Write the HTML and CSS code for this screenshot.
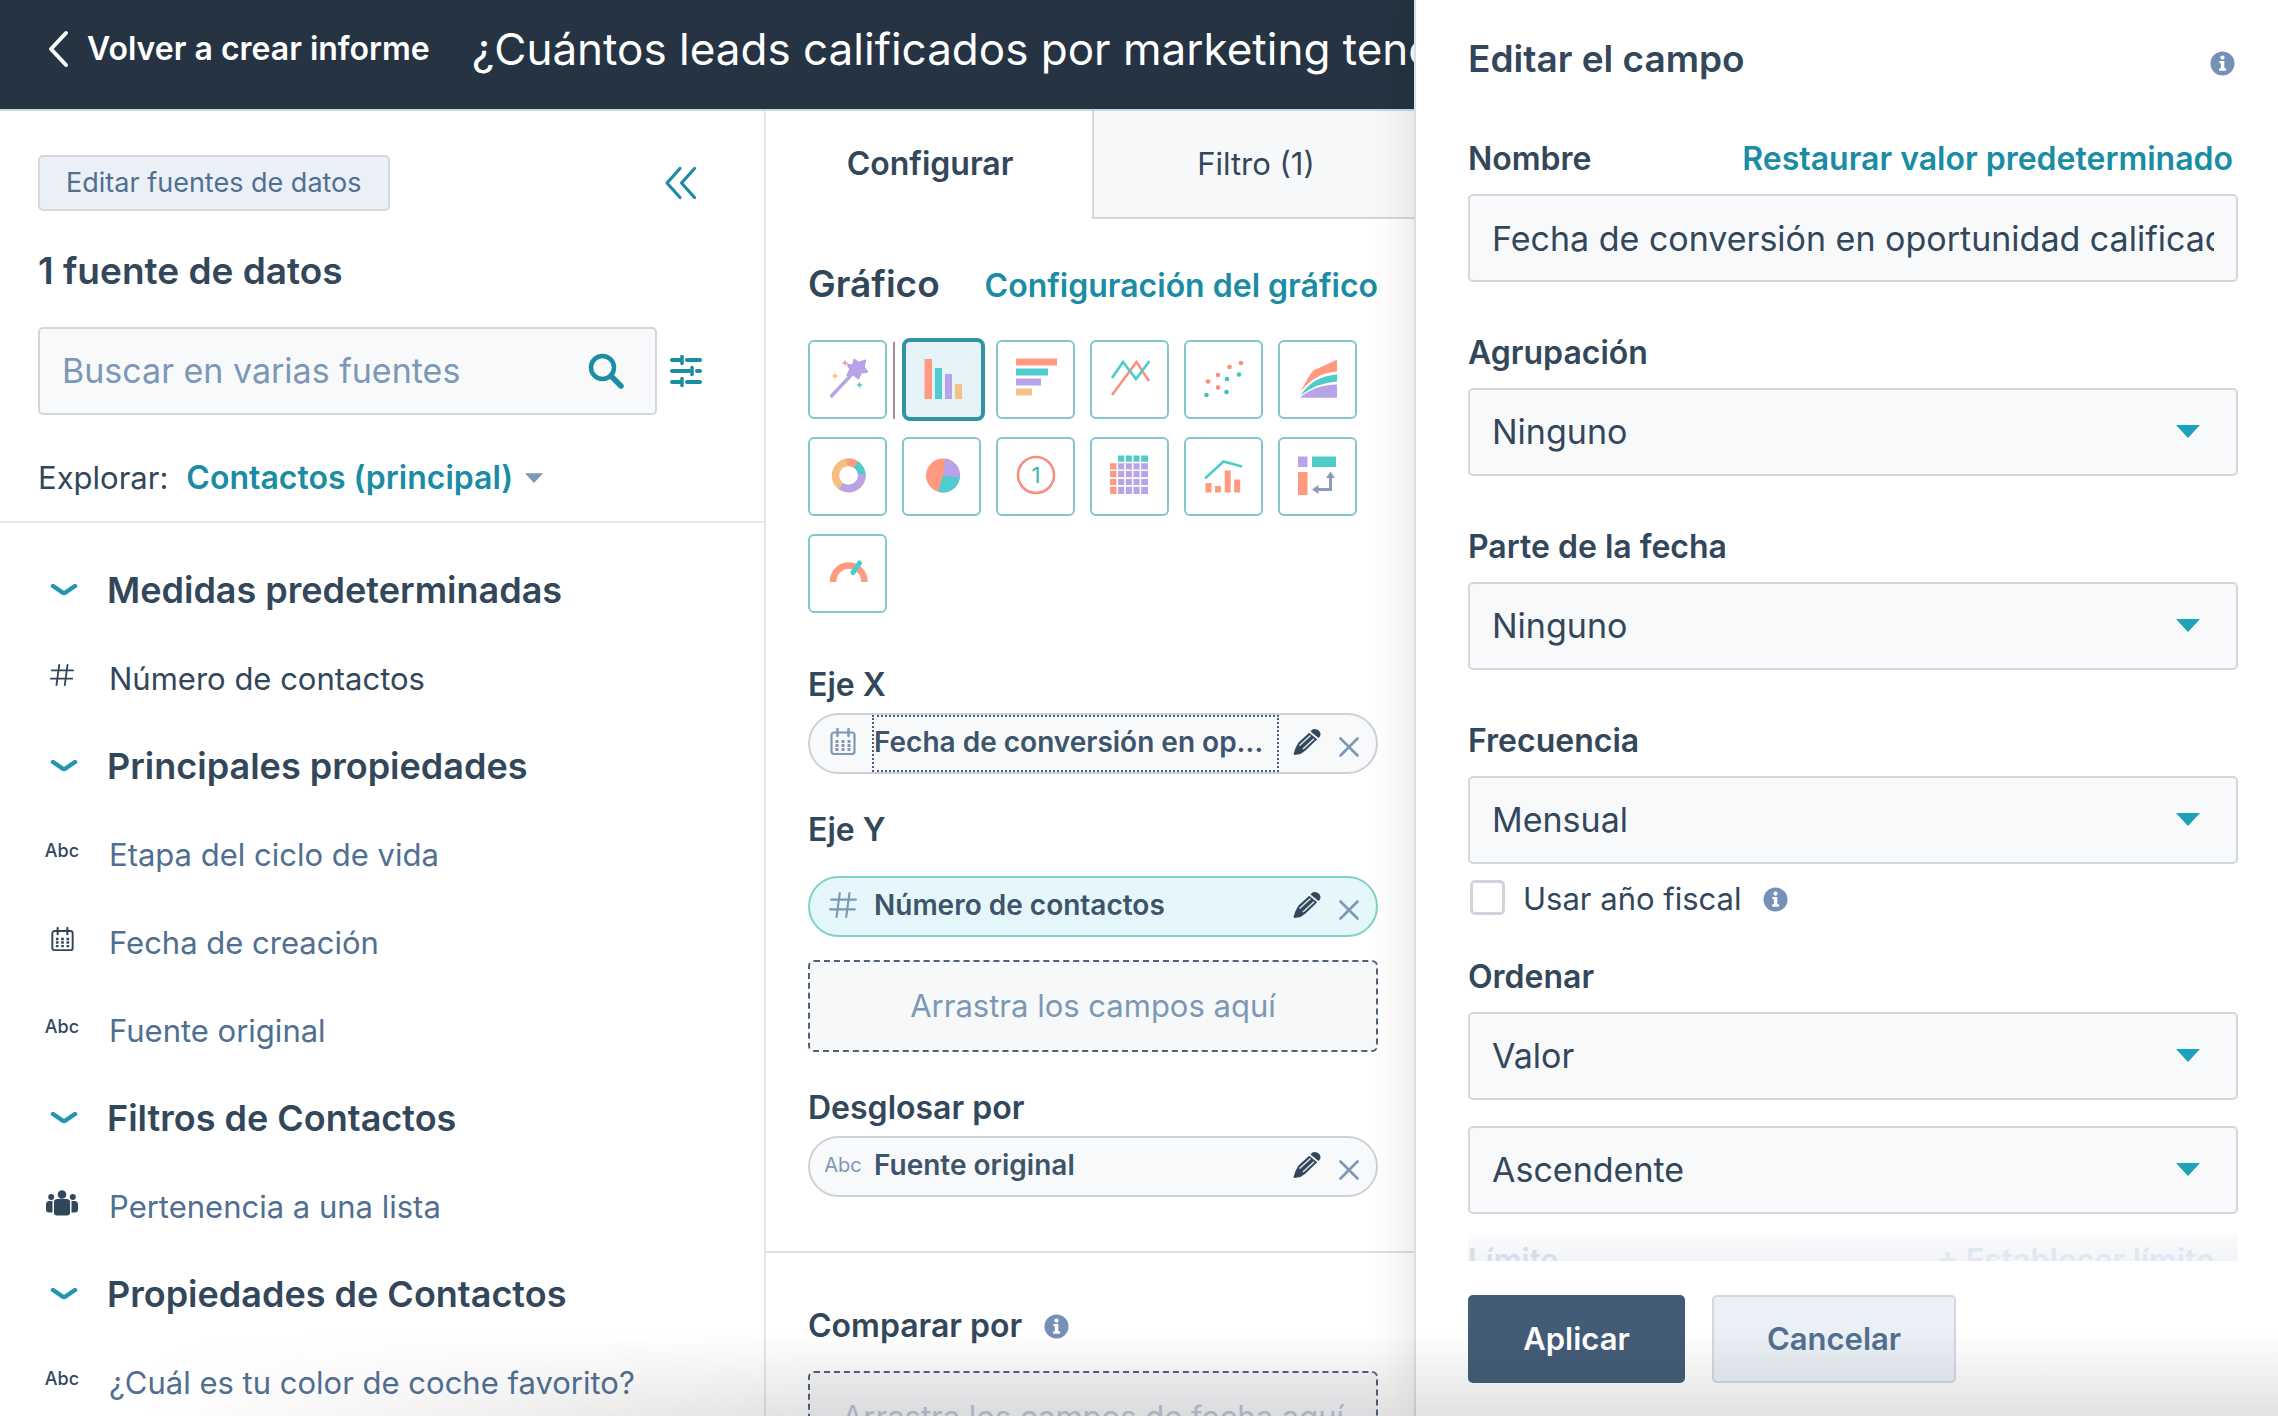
FILE: index.html
```html
<!DOCTYPE html>
<html lang="es">
<head>
<meta charset="utf-8">
<meta name="viewport" content="width=device-width, initial-scale=1">
<title>Creador de informes</title>
<link rel="stylesheet" href="styles.css">
</head>
<body>
<svg class="sprite" aria-hidden="true">
  <symbol id="i-chevron" viewBox="0 0 28 16"><path d="M3 4L12.500 10.500Q14 11.500 15.500 10.500L25 4" fill="none" stroke="currentColor" stroke-width="4.500" stroke-linecap="round" stroke-linejoin="round"/></symbol>
  <symbol id="i-hash" viewBox="0 0 26 26"><path d="M10 2L7 24M19 2L16 24M2 8H25M1 17H24" fill="none" stroke="currentColor" stroke-width="2" stroke-linecap="round"/></symbol>
  <symbol id="i-calendar" viewBox="0 0 26 28"><rect x="1.500" y="4.500" width="23" height="21.500" rx="2.500" fill="none" stroke="currentColor" stroke-width="2.200"/><path d="M7.500 1V8M18.500 1V8" stroke="currentColor" stroke-width="2.400" stroke-linecap="round"/><path d="M5.500 13.500H20.500M5.500 17.500H20.500M5.500 21.500H20.500" stroke="currentColor" stroke-width="2.800" stroke-dasharray="3 3"/></symbol>
  <symbol id="i-people" viewBox="0 0 32 26"><g fill="currentColor"><circle cx="16" cy="4.500" r="4.300"/><path d="M8 12q0-3 3.500-3h9q3.500 0 3.500 3v11q0 2-3 2.500H11q-3-.5-3-2.500z"/><circle cx="5.200" cy="7" r="3"/><circle cx="26.800" cy="7" r="3"/><path d="M6.500 11v11.500H3q-3 0-3-3V14.500Q0 11 3.500 11zM25.500 11v11.500H29q3 0 3-3V14.500Q32 11 28.500 11z"/></g></symbol>
  <symbol id="i-pencil" viewBox="0 0 28 28"><g fill="currentColor"><path d="M17.500 3.500Q19.500 .5 23 1.200 27.500 2.500 27.500 6.500 27.300 8.500 25.500 10z"/><path d="M16.200 4.800L24.200 11.300 12.500 22.500 7.500 26 1.500 27 .5 26 2.500 20 5.500 14.500z"/></g><path d="M6.500 17.500L17.500 7.500M10 21L21 10.800" stroke="#dde7f0" stroke-width="1.500"/></symbol>
  <symbol id="i-close" viewBox="0 0 20 20"><path d="M1.500 1.500L18.500 18.500M18.500 1.500L1.500 18.500" stroke="currentColor" stroke-width="2.600" stroke-linecap="round"/></symbol>
  <symbol id="i-info" viewBox="0 0 26 26"><circle cx="13" cy="13" r="12.500" fill="currentColor"/><circle cx="13" cy="6.800" r="2.200" fill="#fff"/><path d="M9.800 10.500H14.900V18H16.700V20.500H9.600V18H11.300V12.800H9.800z" fill="#fff"/></symbol>
  <symbol id="i-caret" viewBox="0 0 24 13"><path d="M0 0H24L12 13z" fill="currentColor"/></symbol>
</svg>

<div class="app">
  <header class="topbar">
    <a class="back" href="#">
      <svg class="back-icon" viewBox="0 0 22 38" aria-hidden="true"><path d="M19 3L4 19 19 35" fill="none" stroke="currentColor" stroke-width="4" stroke-linecap="round" stroke-linejoin="round"/></svg>
      Volver a crear informe
    </a>
    <h1 class="report-title">¿Cuántos leads calificados por marketing tenemos?</h1>
  </header>

  <aside class="sources">
    <div class="sources-head">
      <div class="sources-actions">
        <button class="btn-small" type="button">Editar fuentes de datos</button>
        <button class="icon-btn" type="button" aria-label="Contraer">
          <svg width="34" height="34" viewBox="0 0 34 34" aria-hidden="true"><path d="M16 2.500L3 17 16 31.500M30.500 2.500L17.500 17 30.500 31.500" fill="none" stroke="currentColor" stroke-width="3.200" stroke-linecap="round" stroke-linejoin="round"/></svg>
        </button>
      </div>
      <h2 class="sources-count">1 fuente de datos</h2>
      <div class="search-row">
        <div class="search">
          <input type="search" aria-label="Buscar en varias fuentes" placeholder="Buscar en varias fuentes">
          <svg width="36" height="36" viewBox="0 0 36 36" aria-hidden="true"><circle cx="14.500" cy="14.500" r="11.500" fill="none" stroke="currentColor" stroke-width="4.500"/><path d="M23 23L33 33" stroke="currentColor" stroke-width="5.500" stroke-linecap="round"/></svg>
        </div>
        <button class="icon-btn" type="button" aria-label="Filtros">
          <svg width="32" height="32" viewBox="0 0 32 32" aria-hidden="true"><path d="M2 5H11M17 5H30M2 16H19M27 16H30M2 27H11M17 27H30" stroke="currentColor" stroke-width="4" stroke-linecap="round"/><path d="M12 1.500V8.500M22 12.500V19.500M12 23.500V30.500" stroke="currentColor" stroke-width="3.500" stroke-linecap="round"/></svg>
        </button>
      </div>
      <div class="explore">
        <span>Explorar:</span>
        <button class="link-btn" type="button">Contactos (principal)<svg class="explore-caret" aria-hidden="true"><use href="#i-caret"/></svg></button>
      </div>
    </div>
    <div class="tree">
      <button class="group" type="button"><svg class="chev" aria-hidden="true"><use href="#i-chevron"/></svg>Medidas predeterminadas</button>
      <div class="field strong"><span class="type"><svg class="t-hash" aria-hidden="true"><use href="#i-hash"/></svg></span>Número de contactos</div>
      <button class="group" type="button"><svg class="chev" aria-hidden="true"><use href="#i-chevron"/></svg>Principales propiedades</button>
      <div class="field"><span class="type">Abc</span>Etapa del ciclo de vida</div>
      <div class="field"><span class="type"><svg class="t-cal" aria-hidden="true"><use href="#i-calendar"/></svg></span>Fecha de creación</div>
      <div class="field"><span class="type">Abc</span>Fuente original</div>
      <button class="group" type="button"><svg class="chev" aria-hidden="true"><use href="#i-chevron"/></svg>Filtros de Contactos</button>
      <div class="field"><span class="type"><svg class="t-people" aria-hidden="true"><use href="#i-people"/></svg></span>Pertenencia a una lista</div>
      <button class="group" type="button"><svg class="chev" aria-hidden="true"><use href="#i-chevron"/></svg>Propiedades de Contactos</button>
      <div class="field"><span class="type">Abc</span>¿Cuál es tu color de coche favorito?</div>
    </div>
  </aside>

  <main class="config">
    <div class="tabs" role="tablist">
      <button class="tab active" type="button" role="tab" aria-selected="true">Configurar</button>
      <button class="tab" type="button" role="tab" aria-selected="false">Filtro (1)</button>
    </div>
    <section class="config-body">
      <div class="chart-head">
        <h2>Gráfico</h2>
        <a class="link" href="#">Configuración del gráfico</a>
      </div>
      <div class="charts">
        <button class="chart auto" type="button" aria-label="Automático"><svg viewBox="2 2 75 75"><path d="M23.500 56L46 32" stroke="#b9a3e8" stroke-width="3.400" stroke-linecap="round"/><path d="M46 19.500l5 2.800 6.500-2-1.500 6.500 3.500 5.200-6.300.8-2.700 6-5-4-6.500.5 3-5.800-2.500-5 5.500.5z" fill="#b9a3e8" stroke="#b9a3e8" stroke-width="1.500" stroke-linejoin="round"/><path d="M37 19.500l1 2.500 2.500 1-2.500 1-1 2.500-1-2.500-2.500-1 2.500-1z" fill="#f29aa0"/><path d="M27 32.500l1 2.500 2.500 1-2.500 1-1 2.500-1-2.500-2.500-1 2.500-1z" fill="#f5c26b"/><path d="M51.500 41.500l1 2.500 2.500 1-2.500 1-1 2.500-1-2.500-2.500-1 2.500-1z" fill="#4fccc8"/></svg></button>
        <button class="chart selected" type="button" aria-label="Barras verticales" aria-pressed="true"><svg viewBox="4 4 75 75"><path d="M22.500 21h7.500v40h-7.500z" fill="#ff9980"/><path d="M33 30h7v31h-7z" fill="#4fccd0"/><path d="M43 36h7v25h-7z" fill="#b9a3e8"/><path d="M53 46h7v15h-7z" fill="#f5c286"/></svg></button>
        <button class="chart" type="button" aria-label="Barras horizontales"><svg viewBox="2 2 75 75"><path d="M20 18.500h41v7H20z" fill="#ff9980"/><path d="M20 28.500h32v7H20z" fill="#4fccd0"/><path d="M20 38.500h25v7H20z" fill="#b9a3e8"/><path d="M20 48.500h16v7H20z" fill="#f5c286"/></svg></button>
        <button class="chart" type="button" aria-label="Líneas"><svg viewBox="2 2 75 75" fill="none" stroke-width="2.600"><path d="M22 55L46.500 22 59 41" stroke="#ff8f80"/><path d="M22 38L33 22 46 39 59.500 21" stroke="#4fccc8"/></svg></button>
        <button class="chart" type="button" aria-label="Dispersión"><svg viewBox="2 2 75 75"><g fill="#f78f7c"><circle cx="57" cy="23" r="2.300"/><circle cx="45.500" cy="27" r="2.300"/><circle cx="34" cy="35" r="2.300"/><circle cx="24" cy="41.500" r="2.300"/><circle cx="34" cy="47.500" r="2.300"/></g><g fill="#3fc4bc"><circle cx="55" cy="34.500" r="2.300"/><circle cx="43" cy="39" r="2.300"/><circle cx="22.500" cy="55" r="2.300"/><circle cx="42.500" cy="52" r="2.300"/></g></svg></button>
        <button class="chart" type="button" aria-label="Áreas"><svg viewBox="2 2 75 75"><path d="M59 19.500V31.500Q37 33 22.500 52Q32 33 36 30Q46 26 59 19.500z" fill="#ff9980"/><path d="M59 34.500V41.500Q38 43 22.500 55.500Q35 36 59 34.500z" fill="#4fccc8"/><path d="M59 44.500V57.700H22Q36 45 59 44.500z" fill="#b9a3e8"/></svg></button>
        <button class="chart" type="button" aria-label="Anillo"><svg viewBox="2 2 75 75" fill="none" stroke-width="7.500"><circle cx="40.700" cy="38.500" r="13.200" stroke="#f5bd82"/><path d="M44.500 25.900A13.200 13.200 0 0 1 53.600 41" stroke="#4fccc8"/><path d="M53.700 37A13.200 13.200 0 0 1 33 49" stroke="#b9a3e8"/><path d="M39 25.400A13.200 13.200 0 0 1 48 27.500" stroke="#ff9980"/></svg></button>
        <button class="chart" type="button" aria-label="Circular"><svg viewBox="2 2 75 75"><circle cx="41" cy="38.500" r="17" fill="#ff9980"/><path d="M41 38.500L43 21.600A17 17 0 0 1 57.800 41.500z" fill="#b9a3e8"/><path d="M41 38.500L57.900 40.500A17 17 0 0 1 36 54.800z" fill="#4fccd0"/></svg></button>
        <button class="chart" type="button" aria-label="Resumen"><svg viewBox="2 2 75 75"><circle cx="40" cy="38" r="18" fill="none" stroke="#f58f80" stroke-width="2.600"/><text x="40" y="46" class="one">1</text></svg></button>
        <button class="chart" type="button" aria-label="Tabla"><svg viewBox="2 2 75 75"><path d="M28 18.500H58V25H28z" fill="#4fccc8"/><path d="M20 26H28V57H20z" fill="#ff9980"/><path d="M28 26H58V57H28z" fill="#b9a3e8"/><path d="M27.300 18V57M35 18V57M42.700 18V57M50.400 18V57M20 25.500H58M20 33.300H58M20 41.100H58M20 48.900H58" stroke="#fff" stroke-width="1.600"/></svg></button>
        <button class="chart" type="button" aria-label="Combinado"><svg viewBox="2 2 75 75"><path d="M21 41.500L39.500 24.500 58 29.500" fill="none" stroke="#4fccc8" stroke-width="2.600"/><path d="M21.500 46h6v9.500h-6zM31 49h6v6.500h-6zM40.700 33.500h6v22h-6zM50.200 42.500h6v13h-6z" fill="#ff9980"/></svg></button>
        <button class="chart" type="button" aria-label="Tabla dinámica"><svg viewBox="2 2 75 75"><path d="M20 19.500h9.500v10.500H20z" fill="#b9a3e8"/><path d="M34 19.500h24v10.500H34z" fill="#4fccc8"/><path d="M20 35h9.500v23H20z" fill="#ff9980"/><path d="M52.500 40V52.500H39" fill="none" stroke="#8b9bb8" stroke-width="3"/><path d="M52.500 34.500L57 41H48zM34 52.500L40.500 48V57z" fill="#8b9bb8"/></svg></button>
        <button class="chart" type="button" aria-label="Indicador"><svg viewBox="2 2 75 75" fill="none"><path d="M25 48A15.700 16.500 0 0 1 56.500 48" stroke="#ff9980" stroke-width="6.600"/><path d="M51.500 29L45 38.500" stroke="#4fccc8" stroke-width="5" stroke-linecap="round"/></svg></button>
      </div>

      <h3 class="axis">Eje X</h3>
      <div class="chip">
        <span class="chip-type"><svg class="c-cal" aria-hidden="true"><use href="#i-calendar"/></svg></span>
        <span class="chip-name focused">Fecha de conversión en oportunidad</span>
        <button class="chip-edit" type="button" aria-label="Editar"><svg><use href="#i-pencil"/></svg></button>
        <button class="chip-x" type="button" aria-label="Quitar"><svg><use href="#i-close"/></svg></button>
      </div>

      <h3 class="axis spaced">Eje Y</h3>
      <div class="chip measure">
        <span class="chip-type"><svg class="c-hash" aria-hidden="true"><use href="#i-hash"/></svg></span>
        <span class="chip-name">Número de contactos</span>
        <button class="chip-edit" type="button" aria-label="Editar"><svg><use href="#i-pencil"/></svg></button>
        <button class="chip-x" type="button" aria-label="Quitar"><svg><use href="#i-close"/></svg></button>
      </div>
      <div class="drop">Arrastra los campos aquí</div>

      <h3 class="axis">Desglosar por</h3>
      <div class="chip">
        <span class="chip-type">Abc</span>
        <span class="chip-name">Fuente original</span>
        <button class="chip-edit" type="button" aria-label="Editar"><svg><use href="#i-pencil"/></svg></button>
        <button class="chip-x" type="button" aria-label="Quitar"><svg><use href="#i-close"/></svg></button>
      </div>
    </section>
    <section class="compare">
      <h3 class="axis">Comparar por <svg class="info" aria-hidden="true"><use href="#i-info"/></svg></h3>
      <div class="drop">Arrastra los campos de fecha aquí</div>
    </section>
  </main>

  <form class="panel">
    <div class="panel-body">
      <div class="panel-head">
        <h2>Editar el campo</h2>
        <svg class="info" aria-hidden="true"><use href="#i-info"/></svg>
      </div>
      <div class="control">
        <div class="label-row"><label for="nombre">Nombre</label><a class="link" href="#">Restaurar valor predeterminado</a></div>
        <input class="box" id="nombre" type="text" value="Fecha de conversión en oportunidad calificada">
      </div>
      <div class="control">
        <label for="agrupacion">Agrupación</label>
        <div class="select"><select class="box" id="agrupacion"><option>Ninguno</option></select><svg aria-hidden="true"><use href="#i-caret"/></svg></div>
      </div>
      <div class="control">
        <label for="parte">Parte de la fecha</label>
        <div class="select"><select class="box" id="parte"><option>Ninguno</option></select><svg aria-hidden="true"><use href="#i-caret"/></svg></div>
      </div>
      <div class="control">
        <label for="frecuencia">Frecuencia</label>
        <div class="select"><select class="box" id="frecuencia"><option>Mensual</option></select><svg aria-hidden="true"><use href="#i-caret"/></svg></div>
      </div>
      <div class="check">
        <input id="fiscal" type="checkbox"><label for="fiscal">Usar año fiscal</label>
        <svg class="info" aria-hidden="true"><use href="#i-info"/></svg>
      </div>
      <div class="control sort">
        <label for="ordenar">Ordenar</label>
        <div class="select"><select class="box" id="ordenar"><option>Valor</option></select><svg aria-hidden="true"><use href="#i-caret"/></svg></div>
        <div class="select second"><select class="box" aria-label="Dirección"><option>Ascendente</option></select><svg aria-hidden="true"><use href="#i-caret"/></svg></div>
      </div>
      <div class="limit"><span>Límite</span><span class="limit-add">+ Establecer límite</span></div>
    </div>
    <div class="panel-foot">
      <button class="btn primary" type="button">Aplicar</button>
      <button class="btn secondary" type="button">Cancelar</button>
    </div>
  </form>
</div>
</body>
</html>
```

FILE: styles.css
```css
:root {
  --text: #33475b;
  --muted: #516f90;
  --soft: #7c98b6;
  --link: #1a8ca3;
  --line: #d3d7dc;
  --field: #f8f9fa;
}

* { box-sizing: border-box; }

body {
  margin: 0;
  background: #fff;
  color: var(--text);
  font-family: Inter, "Open Sans", sans-serif;
  font-size: 31px;
  line-height: 40px;
}

h1, h2, h3 { margin: 0; font-weight: 600; }
button, input, select { font: inherit; color: inherit; }
button { background: none; border: 0; padding: 0; cursor: pointer; }
a { text-decoration: none; }
svg { display: block; flex: none; }
.sprite { position: absolute; width: 0; height: 0; }

.app {
  display: grid;
  grid-template-columns: 766fr 648fr 864fr;
  grid-template-rows: 111px minmax(0, 1fr);
  height: 100vh;
  overflow: hidden;
}

/* Soft shade along the lower edge of the window */
.app::after {
  content: "";
  position: fixed;
  inset: auto 0 0 0;
  height: 84px;
  background: linear-gradient(to bottom, rgba(60, 60, 70, 0), rgba(60, 60, 70, .15));
  -webkit-mask-image: linear-gradient(to right, transparent 6%, #000 36%);
  mask-image: linear-gradient(to right, transparent 6%, #000 36%);
  pointer-events: none;
}

/* Top bar */
.topbar {
  grid-column: 1 / 3;
  display: flex;
  align-items: center;
  gap: 42px;
  padding: 0 0 12px 47px;
  background: #253342;
  border-bottom: 2px solid #c3dbe3;
  overflow: hidden;
  white-space: nowrap;
  color: #fff;
}
.back { display: flex; align-items: center; gap: 18px; color: #fff; font-size: 32px; font-weight: 600; }
.back-icon { width: 22px; height: 38px; }
.report-title { font-size: 44px; line-height: 56px; font-weight: 400; }

/* Data sources */
.sources { border-right: 2px solid #e3e6ea; overflow: hidden; }
.sources-head { padding: 44px 62px 23px 38px; border-bottom: 2px solid #e6e8eb; }
.sources-actions { display: flex; justify-content: space-between; align-items: center; padding-right: 4px; }
.btn-small {
  height: 56px;
  padding: 0 26px;
  border: 2px solid #d3d8df;
  border-radius: 5px;
  background: #eaf0f6;
  color: var(--muted);
  font-size: 27px;
}
.icon-btn { color: var(--link); }
.sources-count { margin-top: 38px; font-size: 37px; line-height: 44px; }
.search-row { display: flex; align-items: center; gap: 13px; margin-top: 34px; }
.search {
  flex: 1;
  min-width: 0;
  display: flex;
  align-items: center;
  height: 88px;
  padding: 0 31px 0 22px;
  border: 2px solid var(--line);
  border-radius: 5px;
  background: var(--field);
  color: var(--link);
}
.search input {
  flex: 1;
  min-width: 0;
  border: 0;
  padding: 0;
  outline: 0;
  background: none;
  font-size: 34px;
}
.search input::placeholder { color: var(--soft); opacity: 1; }
.explore { display: flex; align-items: center; gap: 18px; margin-top: 43px; }
.link-btn { display: flex; align-items: center; gap: 12px; color: var(--link); font-size: 32px; font-weight: 600; }
.explore-caret { width: 18px; height: 10px; color: var(--soft); }

.tree { display: flex; flex-direction: column; padding: 23px 38px 0; }
.group, .field { display: flex; align-items: center; height: 88px; white-space: nowrap; flex: none; }
.group { font-size: 36px; font-weight: 600; padding-left: 12px; gap: 29px; }
.chev { width: 28px; height: 16px; color: #2596b0; }
.field { color: var(--muted); gap: 23px; padding-top: 2px; }
.field.strong { color: var(--text); }
.type { display: flex; justify-content: center; width: 48px; padding-bottom: 8px; font-size: 18px; line-height: 24px; font-weight: 500; color: var(--text); }
.t-hash { width: 24px; height: 24px; }
.t-cal { width: 23px; height: 25px; }
.t-people { width: 32px; height: 26px; }

/* Chart configuration */
.config { overflow: hidden; }
.tabs { display: flex; height: 108px; margin-right: -4px; }
.tab { flex: 1; border: solid var(--line); border-width: 0 0 2px 2px; background: #f7f8f9; }
.tab.active { border-color: transparent; background: #fff; font-size: 32px; font-weight: 600; }
.config-body { padding: 43px 36px 54px 42px; border-bottom: 2px solid #dcdfe3; }
.chart-head { display: flex; justify-content: space-between; align-items: flex-end; white-space: nowrap; }
.chart-head h2 { font-size: 37px; line-height: 44px; }
.link { color: var(--link); font-size: 32px; font-weight: 600; }

.charts { display: grid; grid-template-columns: repeat(6, 79px); gap: 18px 15px; margin-top: 34px; }
.chart { position: relative; height: 79px; border: 2px solid #84c6cf; border-radius: 6px; background: #fff; }
.chart svg { width: 75px; height: 75px; }
.chart.auto::after { content: ""; position: absolute; top: 0; bottom: -2px; right: -10px; width: 2px; background: #a58f9d; }
.chart.selected { height: 83px; margin: -2px -4px -2px 0; border: 4px solid #3093a3; border-radius: 8px; background: #e5f2f8; }
.one { fill: #3cb5b5; font-size: 22px; text-anchor: middle; }

.axis { display: flex; align-items: center; gap: 22px; margin-top: 36px; font-size: 32px; line-height: 40px; }
.charts + .axis { margin-top: 52px; }
.chip {
  display: flex;
  align-items: center;
  height: 61px;
  margin-top: 8px;
  padding: 0 13px 0 10px;
  border: 2px solid #cdd2d8;
  border-radius: 31px;
  background: var(--field);
}
.axis.spaced + .chip { margin-top: 26px; }
.chip.measure { border-color: #7ed3c8; background: #e5f7fa; }
.chip-type { display: flex; justify-content: center; width: 46px; margin-right: 6px; padding-bottom: 4px; font-size: 20px; color: var(--soft); }
.c-cal { width: 26px; height: 28px; }
.c-hash { width: 28px; height: 28px; }
.chip-name {
  flex: 1;
  min-width: 0;
  height: 57px;
  padding: 0 0 0 2px;
  line-height: 55px;
  font-weight: 600;
  font-size: 28px;
  color: #3d546b;
  overflow: hidden;
  white-space: nowrap;
  text-overflow: ellipsis;
}
.chip-name.focused { outline: 2px dotted #4a5a83; outline-offset: -2px; }
.chip-edit { padding: 0 18px 4px 14px; color: #33475b; }
.chip-edit svg { width: 28px; height: 28px; }
.chip-x { padding: 6px 4px 0 0; color: var(--soft); }
.chip-x svg { width: 20px; height: 20px; }
.drop {
  display: flex;
  align-items: center;
  justify-content: center;
  height: 92px;
  margin-top: 23px;
  border: 2px dashed #506078;
  border-radius: 6px;
  background: #f7f8f9;
  color: var(--soft);
  white-space: nowrap;
}
.compare { padding: 53px 36px 0 42px; }
.compare .axis { margin-top: 0; }
.compare .drop { margin-top: 25px; color: #bcc6d2; }
.info { width: 25px; height: 25px; color: #7790b8; }

/* Field editor */
.panel {
  grid-column: 3;
  grid-row: 1 / 3;
  display: flex;
  flex-direction: column;
  border-left: 2px solid #dadde1;
  background: #fff;
  box-shadow: 0 0 48px rgba(0, 0, 0, .12);
}
.panel-body { flex: 1; min-height: 0; overflow: hidden; padding: 37px 40px 0 52px; position: relative; }
.panel-body::after {
  content: "";
  position: absolute;
  inset: auto 40px 0 52px;
  height: 28px;
  background: linear-gradient(to bottom, rgba(248, 248, 249, .5), rgba(238, 240, 250, .75));
}
.panel-head { display: flex; justify-content: space-between; align-items: center; margin-bottom: 58px; padding-right: 3px; }
.panel-head h2 { font-size: 37px; line-height: 44px; }
.panel-head .info { margin-top: 8px; }
.control { display: flex; flex-direction: column; margin-bottom: 51px; }
.control label { font-size: 32px; font-weight: 600; }
.label-row { display: flex; justify-content: space-between; padding-right: 5px; white-space: nowrap; }
.box {
  display: block;
  width: 100%;
  height: 88px;
  margin: 15px 0 0;
  padding: 0 22px;
  border: 2px solid var(--line);
  border-radius: 5px;
  background: var(--field);
  font-size: 34px;
  appearance: none;
  -webkit-appearance: none;
}
.select { display: grid; align-items: center; }
.select > * { grid-area: 1 / 1; }
.select svg { justify-self: end; width: 24px; height: 13px; margin: 13px 38px 0 0; color: #1ca3b5; pointer-events: none; }
.check { display: flex; align-items: center; margin-top: -36px; }
.check input {
  appearance: none;
  -webkit-appearance: none;
  width: 35px;
  height: 35px;
  margin: 0 18px 4px 2px;
  border: 3px solid #d0d3de;
  border-radius: 5px;
  background: #fff;
}
.check .info { margin-left: 21px; }
.sort { margin: 38px 0 0; }
.second { margin-top: 11px; }
.limit { display: flex; justify-content: space-between; margin-top: 26px; padding-right: 24px; font-weight: 600; color: #a3adb9; }
.limit-add { color: #b9d3dc; }
.panel-foot { display: flex; gap: 27px; padding: 34px 40px 33px 52px; }
.btn { height: 88px; border-radius: 5px; font-weight: 600; }
.primary { width: 217px; background: #425b76; color: #fff; }
.secondary { width: 244px; border: 2px solid #d3d8df; background: #eaf0f6; color: var(--muted); }
```
